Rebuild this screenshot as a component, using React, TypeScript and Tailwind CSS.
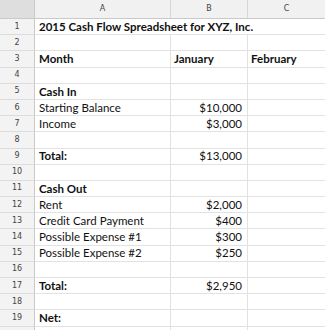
import React from 'react';

type Row = {
  a?: string;
  b?: string;
  c?: string;
  boldA?: boolean;
  boldBC?: boolean;
  title?: boolean;
};

const rows: Row[] = [
  { a: '2015 Cash Flow Spreadsheet for XYZ, Inc.', title: true },
  {},
  { a: 'Month', b: 'January', c: 'February', boldA: true, boldBC: true },
  {},
  { a: 'Cash In', boldA: true },
  { a: 'Starting Balance', b: '$10,000' },
  { a: 'Income', b: '$3,000' },
  {},
  { a: 'Total:', b: '$13,000', boldA: true },
  {},
  { a: 'Cash Out', boldA: true },
  { a: 'Rent', b: '$2,000' },
  { a: 'Credit Card Payment', b: '$400' },
  { a: 'Possible Expense #1', b: '$300' },
  { a: 'Possible Expense #2', b: '$250' },
  {},
  { a: 'Total:', b: '$2,950', boldA: true },
  {},
  { a: 'Net:', boldA: true },
  {},
];

const cell = "font-['Lato',sans-serif] text-[11.5px] text-[#111] leading-none flex items-center whitespace-nowrap";

export default function App() {
  return (
    <div className="w-[325px] h-[330px] overflow-hidden bg-white">
      <div className="grid grid-cols-[35px_136px_77px_77px] h-[19px] bg-[#f1f1f1] border-b border-[#c9c9c9] font-['DejaVu_Sans',sans-serif] text-[8px] text-[#444]">
        <div className="bg-[#dedede] border-r border-[#c9c9c9]" />
        <div className="flex items-center justify-center border-r border-[#d6d6d6]">A</div>
        <div className="flex items-center justify-center border-r border-[#d6d6d6]">B</div>
        <div className="flex items-center justify-center">C</div>
      </div>
      {rows.map((r, i) => (
        <div key={i} className="grid grid-cols-[35px_136px_77px_77px] h-[16.2px] border-b border-[#e2e2e2]">
          <div className="flex items-center justify-center bg-[#f3f3f3] border-r border-[#c9c9c9] border-b border-b-[#dcdcdc] -mb-px font-['DejaVu_Sans',sans-serif] text-[8px] text-[#444]">
            {i < 19 ? i + 1 : ''}
          </div>
          {r.title ? (
            <div className={`${cell} col-span-3 pl-[4px] font-bold`}>{r.a}</div>
          ) : (
            <>
              <div className={`${cell} pl-[4px] border-r border-[#e2e2e2] ${r.boldA ? 'font-bold' : ''}`}>{r.a}</div>
              <div
                className={`${cell} border-r border-[#e2e2e2] ${r.boldBC ? 'font-bold pl-[3px]' : 'justify-end pr-[5px]'}`}
              >
                {r.b}
              </div>
              <div className={`${cell} pl-[3px] ${r.boldBC ? 'font-bold' : ''}`}>{r.c}</div>
            </>
          )}
        </div>
      ))}
    </div>
  );
}
